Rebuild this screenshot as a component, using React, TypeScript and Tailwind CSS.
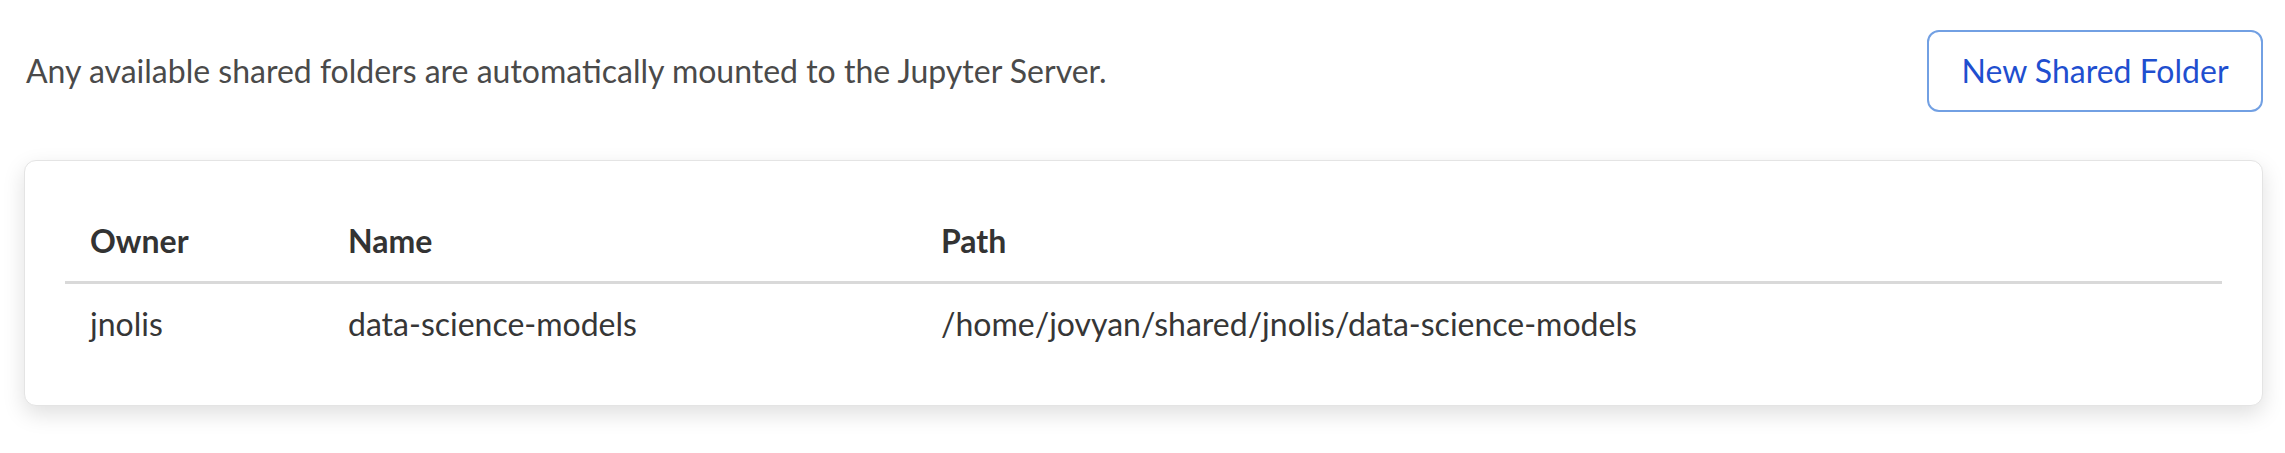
import React from "react";

export default function App() {
  const rows = [
    {
      owner: "jnolis",
      name: "data-science-models",
      path: "/home/jovyan/shared/jnolis/data-science-models",
    },
  ];
  return (
    <div
      className="min-h-screen bg-white"
      style={{ fontFamily: "Lato, 'Noto Sans', sans-serif" }}
    >
      <div className="flex items-center justify-between pl-[26px] pr-[22px] pt-[30px]">
        <p className="text-[32px] leading-[1.2] text-[#4a4a4a]">
          Any available shared folders are automatically mounted to the Jupyter Server.
        </p>
        <button className="h-[82px] w-[336px] rounded-[12px] border-2 border-[#72a0e3] bg-white text-[32px] leading-[1.2] text-[#1f4fcf]">
          New Shared Folder
        </button>
      </div>

      <div className="ml-[24px] mr-[22px] mt-[48px] rounded-[12px] border border-[#e4e4e4] bg-white px-[40px] pb-[61px] pt-[61px] shadow-[0_8px_22px_rgba(0,0,0,0.13)]">
        <div className="grid grid-cols-[258px_593px_1fr] border-b-[3px] border-[#d9d9d9] pb-[21px] text-[32px] font-bold leading-[1.2] text-[#333333]">
          <div className="px-[25px]">Owner</div>
          <div className="px-[25px]">Name</div>
          <div className="px-[25px]">Path</div>
        </div>
        {rows.map((r) => (
          <div
            key={r.path}
            className="grid grid-cols-[258px_593px_1fr] pt-[21px] text-[32px] leading-[1.2] text-[#363636]"
          >
            <div className="px-[25px]">{r.owner}</div>
            <div className="px-[25px]">{r.name}</div>
            <div className="px-[25px]">{r.path}</div>
          </div>
        ))}
      </div>
    </div>
  );
}
